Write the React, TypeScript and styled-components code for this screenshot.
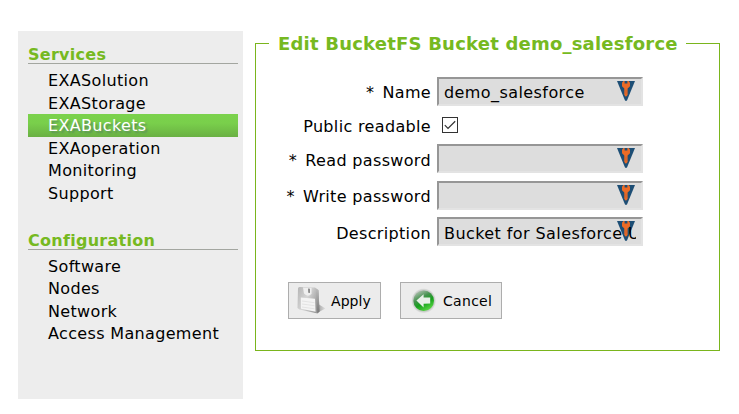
import React from "react";
import styled, { createGlobalStyle, css } from "styled-components";

const GlobalStyle = createGlobalStyle`
  * { box-sizing: border-box; }
  body {
    margin: 0;
    background: #fff;
    color: #000;
    font-family: Verdana, "DejaVu Sans", sans-serif;
    font-size: 16px;
  }
`;

const Page = styled.div`
  display: flex;
  align-items: flex-start;
  width: 739px;
  height: 414px;
  padding: 31px 0 0 18px;
  gap: 12px;
  overflow: hidden;
`;

const Sidebar = styled.nav`
  width: 225px;
  height: 368px;
  padding: 14px 5px 0 10px;
  background: #ededed;
`;

const Section = styled.section`
  height: 185.5px;
`;

const SectionTitle = styled.h2`
  height: 19px;
  margin: 0 0 5.4px;
  border-bottom: 1px solid #a3a6a0;
  color: #76b921;
  font-size: 16px;
  line-height: 20px;
  letter-spacing: 0.28px;
  white-space: nowrap;
`;

const Menu = styled.ul`
  margin: 0;
  padding: 0;
  list-style: none;
`;

const MenuItem = styled.li<{ $active?: boolean }>`
  height: 22.5px;
  padding-left: 20px;
  line-height: 24.6px;
  letter-spacing: 0.34px;
  white-space: nowrap;
  ${(p) =>
    p.$active &&
    css`
      color: #fff;
      background: linear-gradient(#7bd24c 0%, #79cf4b 40%, #6ab043 100%);
      text-shadow: 2px 2px 2px #5a8f5a;
    `}
`;

const Panel = styled.fieldset`
  width: 465px;
  height: 320px;
  min-width: 0;
  margin: 0;
  padding: 21px 0 0 0;
  border: 1px solid #7ab51d;
`;

const Legend = styled.legend`
  width: 417px;
  height: 25px;
  margin-left: 13px;
  padding: 0 9px;
  color: #76b921;
  font-size: 18px;
  font-weight: bold;
  line-height: 25px;
  letter-spacing: 0.21px;
  white-space: nowrap;
`;

const Fields = styled.div`
  display: grid;
  grid-template-columns: 175px 206px;
  grid-template-rows: 29px 38px 37px 36px 29px;
  column-gap: 6px;
`;

const Label = styled.label<{ $drop: number }>`
  height: 29px;
  padding-top: ${(p) => p.$drop}px;
  line-height: 30px;
  letter-spacing: 0.34px;
  text-align: right;
  white-space: nowrap;
`;

const Star = styled.span`
  display: inline-block;
  width: 16.5px;
  text-align: left;
`;

const Field = styled.div`
  display: flex;
  width: 206px;
  height: 29px;
  border: 2px solid;
  border-color: #969696 #e3e3e3 #e3e3e3 #969696;
  background: #ddd;
`;

const Value = styled.span<{ $line: number }>`
  position: relative;
  z-index: 1;
  width: 192px;
  height: 25px;
  flex: none;
  margin-left: 5px;
  line-height: ${(p) => p.$line}px;
  letter-spacing: 0.42px;
  white-space: nowrap;
  overflow: hidden;
`;

const KeyBadge = styled.svg`
  flex: none;
  width: 18px;
  height: 20px;
  margin: 2px 0 0 -19px;
`;

const CheckCell = styled.div`
  padding: 11px 0 0 5px;
  line-height: 0;
`;

const Buttons = styled.div`
  display: flex;
  gap: 19px;
  margin: 36px 0 0 32px;
`;

const Button = styled.button<{ $width: number; $gap: number; $spacing: number }>`
  display: flex;
  align-items: center;
  width: ${(p) => p.$width}px;
  height: 37px;
  padding: 0 0 0 8px;
  gap: ${(p) => p.$gap}px;
  border: 1px solid #adadad;
  background: #ececec;
  color: #000;
  font: 14px Verdana, "DejaVu Sans", sans-serif;
  letter-spacing: ${(p) => p.$spacing}px;
  white-space: nowrap;
`;

const KeyIcon = () => (
  <KeyBadge viewBox="0 0 18 20">
    <path d="M0 0H18L9.9 19.8H8.1Z" fill="#1d4e75" />
    <path
      d="M6.4 0L5 1.8V5.2L7.3 7.6V14L8.9 15.8L10.6 14V7.6L13 5.2V1.8L11.6 0H10.4V2.6H7.6V0Z"
      fill="#ec6b26"
    />
    <path d="M9 8.6V13.4" stroke="#b95736" strokeWidth=".6" />
  </KeyBadge>
);

const CheckIcon = () => (
  <svg width="16" height="16" viewBox="0 0 16 16">
    <rect x=".5" y=".5" width="15" height="15" fill="#fff" stroke="#333" />
    <path d="M2.8 8.2L6 11.4L13.2 4.3" fill="none" stroke="#333" strokeWidth="1.2" />
  </svg>
);

const DiskIcon = () => (
  <svg width="29" height="29" viewBox="0 0 29 29">
    <defs>
      <linearGradient id="disk" x2="1" y2=".5">
        <stop stopColor="#b4b4b4" />
        <stop offset=".5" stopColor="#d6d6d6" />
        <stop offset="1" stopColor="#999" />
      </linearGradient>
      <linearGradient id="side" x2="0" y2="1">
        <stop stopColor="#bbb" />
        <stop offset="1" stopColor="#777" />
      </linearGradient>
      <linearGradient id="shade">
        <stop stopColor="#999" />
        <stop offset="1" stopColor="#e2e2e2" />
      </linearGradient>
    </defs>
    <path d="M20 27L28.5 22.5L22 18.5Z" fill="url(#shade)" />
    <path d="M1 2.5Q1 1 2.5 1L18 1.5L21.5 4L22.5 25.5L20.5 27.5L2.5 23.5L.5 22Z" fill="url(#disk)" />
    <path d="M19 3L21.5 4.5L22.5 25.5L20.3 27.2Z" fill="url(#side)" />
    <path d="M6 1.5L14.5 2V8Q10.5 11.5 7 7.5Z" fill="#efefef" />
    <path d="M11 2.5L13 2.7V7L11.2 6.7Z" fill="#8c8c8c" />
    <path d="M3.8 11.5L18 12.8L18.6 25.7L4 22.7Z" fill="#f4f4f4" />
    <path d="M5 15L17.5 16.7M5 18L17.5 19.7M5 21L17.5 22.8" stroke="#e0e0e0" strokeWidth=".8" />
  </svg>
);

const BackIcon = () => (
  <svg width="28" height="28" viewBox="0 0 28 28">
    <defs>
      <linearGradient id="orb" x1=".2" x2=".75" y2="1">
        <stop stopColor="#b9c4b9" />
        <stop offset=".35" stopColor="#479350" />
        <stop offset=".6" stopColor="#16a01c" />
        <stop offset="1" stopColor="#62e048" />
      </linearGradient>
      <radialGradient id="rim">
        <stop offset=".82" stopColor="#bcc2bc" />
        <stop offset="1" stopColor="#e4e4e4" />
      </radialGradient>
    </defs>
    <circle cx="14.7" cy="13.8" r="12.2" fill="url(#rim)" />
    <circle cx="14.7" cy="13.8" r="10.3" fill="url(#orb)" />
    <path d="M7.4 13.6L14.6 7.2V10.6L21.2 10.4V16.6L14.6 16.8V20.4Z" fill="#e9f0e8" />
  </svg>
);

const services = ["EXASolution", "EXAStorage", "EXABuckets", "EXAoperation", "Monitoring", "Support"];
const configuration = ["Software", "Nodes", "Network", "Access Management"];

const NavSection = ({ title, items, active }: { title: string; items: string[]; active?: string }) => (
  <Section>
    <SectionTitle>{title}</SectionTitle>
    <Menu>
      {items.map((item) => (
        <MenuItem key={item} $active={item === active}>
          {item}
        </MenuItem>
      ))}
    </Menu>
  </Section>
);

const TextField = ({ value = "", line = 27 }: { value?: string; line?: number }) => (
  <Field>
    <Value $line={line}>{value}</Value>
    <KeyIcon />
  </Field>
);

export default function App() {
  return (
    <>
      <GlobalStyle />
      <Page>
        <Sidebar>
          <NavSection title="Services" items={services} active="EXABuckets" />
          <NavSection title="Configuration" items={configuration} />
        </Sidebar>
        <Panel>
          <Legend>Edit BucketFS Bucket demo_salesforce</Legend>
          <Fields>
            <Label $drop={1}>
              <Star>*</Star>Name
            </Label>
            <TextField value="demo_salesforce" />
            <Label $drop={6}>Public readable</Label>
            <CheckCell>
              <CheckIcon />
            </CheckCell>
            <Label $drop={2}>
              <Star>*</Star>Read password
            </Label>
            <TextField />
            <Label $drop={1}>
              <Star>*</Star>Write password
            </Label>
            <TextField />
            <Label $drop={2}>Description</Label>
            <TextField value="Bucket for Salesforce U" line={29} />
          </Fields>
          <Buttons>
            <Button $width={93} $gap={5} $spacing={0.05}>
              <DiskIcon />
              Apply
            </Button>
            <Button $width={102} $gap={6} $spacing={0.3}>
              <BackIcon />
              Cancel
            </Button>
          </Buttons>
        </Panel>
      </Page>
    </>
  );
}
